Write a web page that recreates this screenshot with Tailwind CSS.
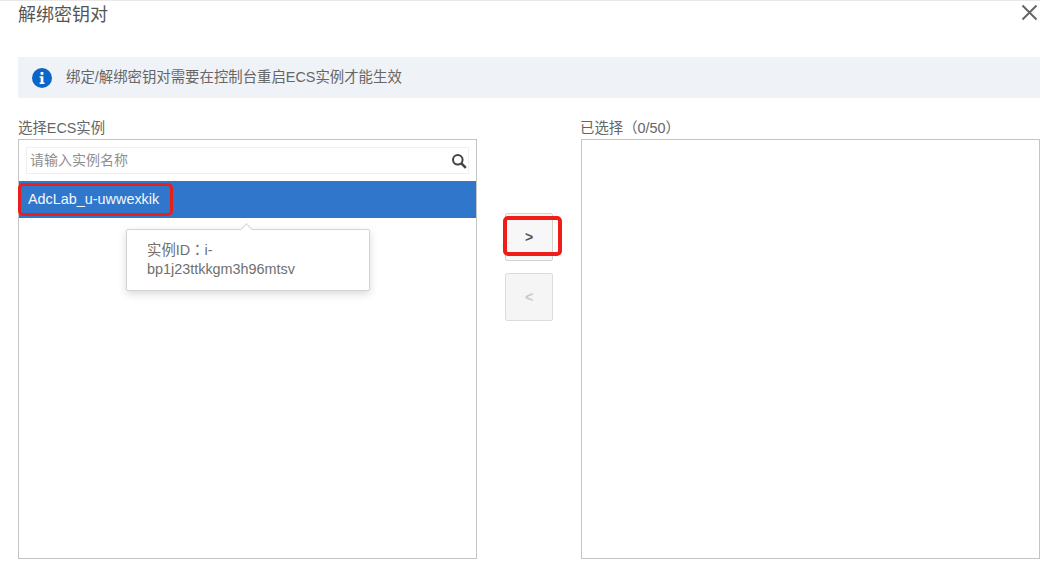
<!DOCTYPE html>
<html lang="zh-CN">
<head>
    <meta charset="UTF-8">
    <title>解绑密钥对</title>
    <script src="https://cdn.jsdelivr.net/npm/@tailwindcss/browser@4"></script>
</head>
<body class="bg-white overflow-hidden font-['Liberation_Sans','Noto_Sans_CJK_SC',sans-serif] text-[#666]">
    <div class="w-[1040px] h-[563px] border-t border-[#e8e8e8] overflow-hidden">
        <!-- Header -->
        <div class="flex justify-between pl-[18px] pr-[2px] h-[56px]">
            <h1 class="text-[18px] leading-[26px] mt-[1px] font-normal text-[#555]">解绑密钥对</h1>
            <svg class="w-[17px] h-[17px] mt-[3px]" viewBox="0 0 17 17" fill="none" stroke="#666" stroke-width="2">
                <path d="M1.5 1.5L15.5 15.5M15.5 1.5L1.5 15.5"></path>
            </svg>
        </div>

        <!-- Notice -->
        <div class="ml-[18px] h-[41px] bg-[#eff2f6] flex items-center pl-[14px] gap-[14px] text-[14.4px] text-[#666]">
            <svg class="w-[20px] h-[20px]" viewBox="0 0 20 20">
                <circle cx="10" cy="10" r="10" fill="#0b66c9"></circle>
                <rect x="8.6" y="4" width="2.8" height="2.8" fill="#fff"></rect>
                <path d="M7.6 8.2h3.8v6.2h1.2v1.6H7.6v-1.6h1.1V9.8H7.6z" fill="#fff"></path>
            </svg>
            <span>绑定/解绑密钥对需要在控制台重启ECS实例才能生效</span>
        </div>

        <!-- Transfer -->
        <div class="flex pl-[18px] mt-[20px] text-[14.4px]">
            <div class="w-[459px] shrink-0">
                <div class="h-[21px] leading-[20px]">选择ECS实例</div>
                <div class="relative h-[420px] border border-[#c4c4c4] pt-[7px]">
                    <div class="mx-[7px] h-[27px] border border-[#f0f0f0] flex items-center justify-between pl-[3px] pr-[1px]">
                        <span class="text-[14px] text-[#8f8f8f]">请输入实例名称</span>
                        <svg class="w-[16px] h-[16px]" viewBox="0 0 16 16" fill="none" stroke="#444" stroke-width="2">
                            <circle cx="6.8" cy="6.8" r="4.8"></circle>
                            <path d="M10.4 10.4L14.8 14.8" stroke-width="2.6"></path>
                        </svg>
                    </div>
                    <div class="mt-[7px] h-[37px] bg-[#3077cc] text-[#f4f8fd] leading-[37px] pl-[9px]">AdcLab_u-uwwexkik</div>
                    <!-- red annotation -->
                    <div class="absolute left-[-1px] top-[43px] w-[155px] h-[33px] border-[3px] border-[#e8201c] rounded-[5px]"></div>
                    <!-- tooltip -->
                    <div class="absolute left-[107px] top-[89px] w-[244px] h-[62px] bg-white border border-[#d4d4d4] rounded-[2px] shadow-[0_3px_8px_rgba(0,0,0,0.15)] pl-[20px] pt-[9px] leading-[19px] text-[#707070]">
                        <div class="absolute left-[115px] top-[-5px] w-[9px] h-[9px] bg-white border-l border-t border-[#d4d4d4] rotate-45"></div>
                        <div class="[text-spacing-trim:space-all]">实例ID<span lang="zh-TW" class="font-['Noto_Sans_CJK_TC']">：</span>i-</div>
                        <div>bp1j23ttkkgm3h96mtsv</div>
                    </div>
                </div>
            </div>

            <!-- Move buttons -->
            <div class="relative w-[103px] shrink-0 pt-[95px] pl-[28px]">
                <div class="w-[48px] h-[48px] bg-[#f7f7f7] border border-[#d2d2d2] rounded-[2px] flex items-center justify-center text-[14px] font-bold text-[#555]">&gt;</div>
                <div class="w-[48px] h-[48px] mt-[12px] bg-[#f5f5f5] border border-[#dcdcdc] rounded-[2px] flex items-center justify-center text-[14px] font-bold text-[#c8c8c8]">&lt;</div>
                <div class="absolute left-[26px] top-[98px] w-[59px] h-[40px] border-[4px] border-[#f01c18] rounded-[5px]"></div>
            </div>

            <div class="w-[460px] shrink-0">
                <div class="h-[21px] leading-[20px] [text-spacing-trim:space-all]">已选择（0/50）</div>
                <div class="ml-[1px] h-[420px] border border-[#c4c4c4]"></div>
            </div>
        </div>
    </div>
</body>
</html>
